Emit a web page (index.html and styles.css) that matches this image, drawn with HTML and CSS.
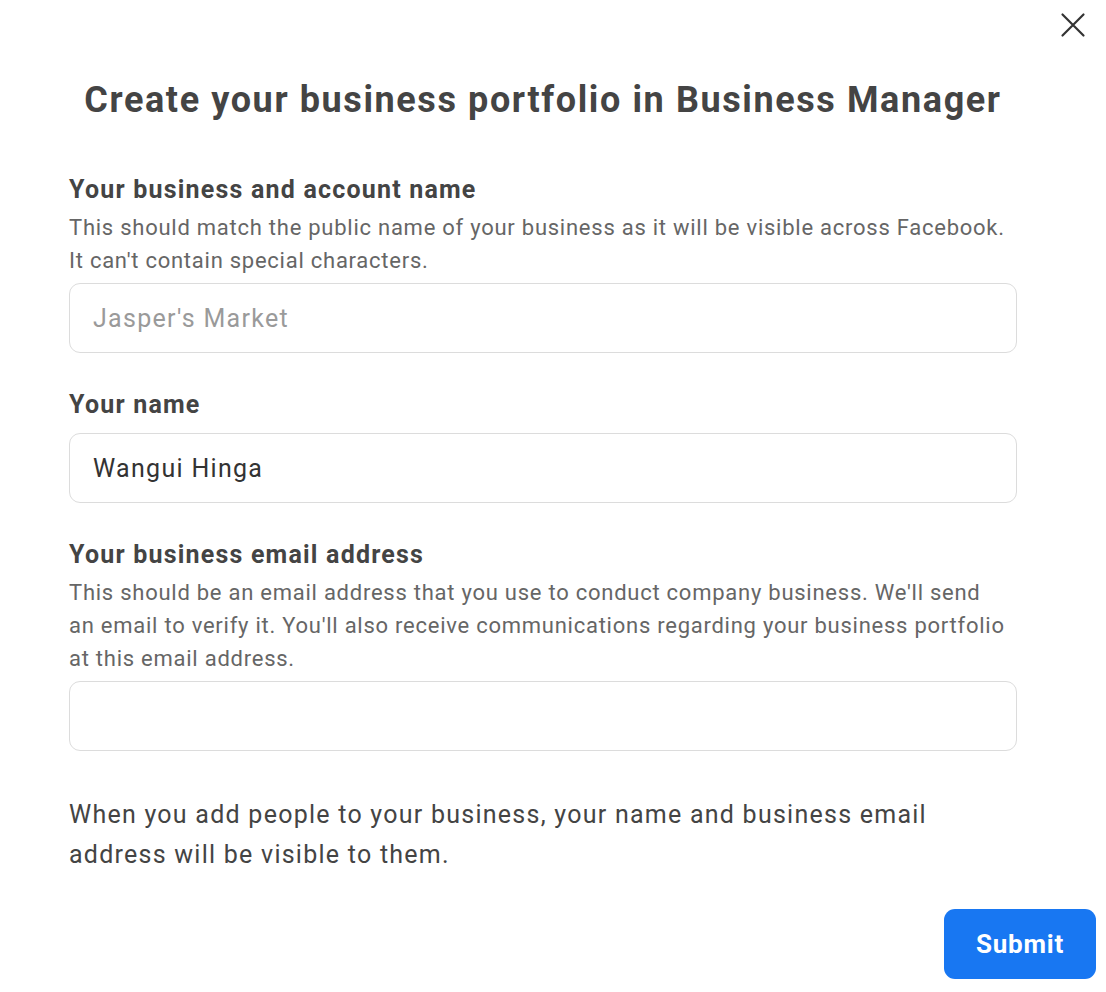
FILE: index.html
```html
<!DOCTYPE html>
<html>
<head>
<meta charset="utf-8">
<link rel="stylesheet" href="styles.css">
</head>
<body>
<div class="dialog">
  <button class="close" aria-label="Close">
    <svg width="26" height="26" viewBox="0 0 26 26"><path d="M2.5 2.5 L23.5 23.5 M23.5 2.5 L2.5 23.5" stroke="#333" stroke-width="2.2" stroke-linecap="round"/></svg>
  </button>
  <div class="content">
    <h1 class="title">Create your business portfolio in Business Manager</h1>
    <div class="field">
      <div class="label">Your business and account name</div>
      <div class="desc">This should match the public name of your business as it will be visible across Facebook.<br>It can't contain special characters.</div>
      <div class="input"><span class="placeholder">Jasper's Market</span></div>
    </div>
    <div class="field">
      <div class="label">Your name</div>
      <div class="input"><span class="value">Wangui Hinga</span></div>
    </div>
    <div class="field">
      <div class="label">Your business email address</div>
      <div class="desc">This should be an email address that you use to conduct company business. We'll send<br>an email to verify it. You'll also receive communications regarding your business portfolio<br>at this email address.</div>
      <div class="input"></div>
    </div>
    <p class="note">When you add people to your business, your name and business email<br>address will be visible to them.</p>
  </div>
  <div class="footer">
    <button class="submit">Submit</button>
  </div>
</div>
</body>
</html>
```
FILE: styles.css
```css
* { box-sizing: border-box; }
html, body { margin: 0; padding: 0; background: #fff; }
body { font-family: Roboto, "Liberation Sans", sans-serif; color: #444; }
.dialog { position: relative; width: 1106px; height: 992px; padding-top: 78px; }
.close { position: absolute; top: 10px; right: 18px; width: 30px; height: 30px; padding: 2px; border: 0; background: transparent; display: flex; align-items: center; justify-content: center; }
.content { margin-left: 69px; width: 948px; display: flex; flex-direction: column; }
.title { margin: 0 0 51px; text-align: center; font-size: 36px; font-weight: 700; color: #444; line-height: 44px; letter-spacing: 1.6px; white-space: nowrap; }
.field { display: flex; flex-direction: column; margin-bottom: 35px; }
.label { font-size: 25px; font-weight: 700; line-height: 34px; color: #444; letter-spacing: 1.2px; }
.desc { font-size: 22px; line-height: 33px; color: #666; margin-top: 4px; letter-spacing: 0.75px; white-space: nowrap; }
.input { margin-top: 11px; height: 70px; border: 1.5px solid #dcdcdc; border-radius: 11px; display: flex; align-items: center; padding-left: 23px; font-size: 25px; letter-spacing: 1.3px; }
.desc + .input { margin-top: 6px; }
.placeholder { color: #9a9a9a; }
.value { color: #333; }
.note { margin: 9px 0 0; font-size: 25px; line-height: 40px; color: #444; letter-spacing: 1.25px; white-space: nowrap; }
.footer { display: flex; justify-content: flex-end; padding-right: 10px; margin-top: 34px; }
.submit { width: 152px; height: 70px; border: 0; border-radius: 11px; background: #1877f2; color: #fff; font-family: Roboto, "Liberation Sans", sans-serif; font-weight: 700; font-size: 26px; letter-spacing: 0.8px; }
```
